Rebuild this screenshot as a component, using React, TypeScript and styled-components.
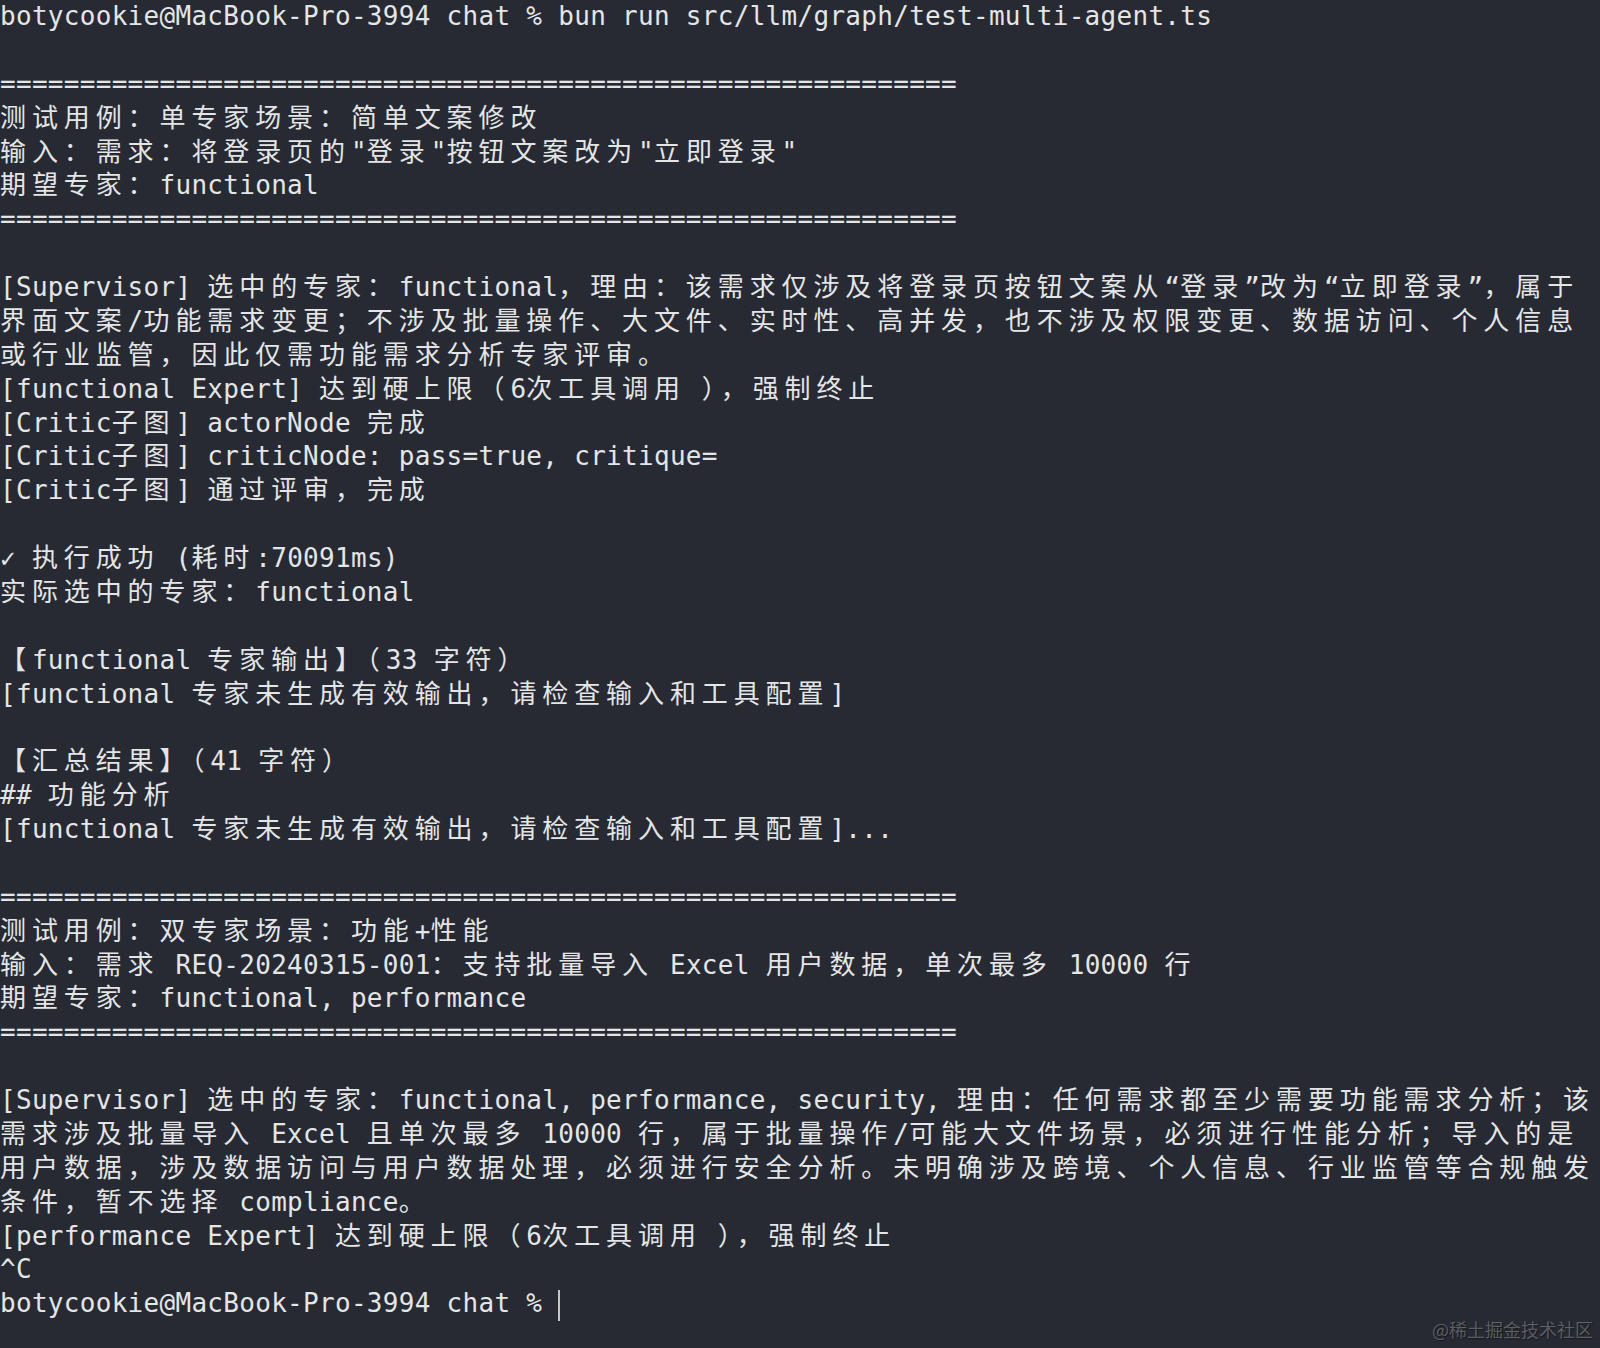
import React from "react";
import styled, { createGlobalStyle } from "styled-components";

const CELL = 15.95;
const ROW = 33.88;
const FONT = 26;

const GlobalStyle = createGlobalStyle`
  html, body {
    margin: 0;
    padding: 0;
    background: #272a32;
  }
  body {
    width: 1600px;
    height: 1348px;
    overflow: hidden;
  }
`;

const Terminal = styled.main`
  position: relative;
  width: 1600px;
  height: 1348px;
  background: #272a32;
  color: #e4e5e7;
  font-family: "DejaVu Sans Mono", "Liberation Mono", "Noto Sans CJK SC", monospace;
  font-size: ${FONT}px;
  letter-spacing: ${CELL - FONT * (1233 / 2048)}px;
  overflow: hidden;
  display: grid;
  grid-auto-rows: ${ROW}px;
  align-content: start;
`;

const Line = styled.div`
  white-space: pre;
  line-height: ${ROW}px;
  height: ${ROW}px;
`;

const Wide = styled.span`
  font-family: "Noto Sans CJK SC", "Noto Sans CJK JP", sans-serif;
  letter-spacing: ${2 * CELL - FONT}px;
  line-height: ${FONT}px;
`;

const Cursor = styled.span`
  display: inline-block;
  width: 1.5px;
  height: 31px;
  background: #c4c6ca;
  vertical-align: -9px;
`;

const Watermark = styled.div`
  position: absolute;
  right: 7px;
  bottom: 10px;
  font-family: "Noto Sans CJK SC", sans-serif;
  font-size: 18px;
  line-height: 18px;
  letter-spacing: 0;
  color: rgba(190, 193, 200, 0.38);
  text-shadow: 1px 1px 1px rgba(0, 0, 0, 0.45);
`;

const WIDE_RE =
  /[\u1100-\u115F\u2E80-\u303E\u3040-\uA4CF\uAC00-\uD7A3\uF900-\uFAFF\uFE30-\uFE4F\uFF00-\uFF60\uFFE0-\uFFE6]/;

type Seg = { wide: boolean; text: string };

function split(text: string): Seg[] {
  const segs: Seg[] = [];
  for (const ch of Array.from(text)) {
    const wide = WIDE_RE.test(ch);
    const last = segs[segs.length - 1];
    if (last && last.wide === wide) last.text += ch;
    else segs.push({ wide, text: ch });
  }
  return segs;
}

const TermLine: React.FC<{ text: string; children?: React.ReactNode }> = ({ text, children }) => (
  <Line>
    {split(text).map((s, i) =>
      s.wide ? <Wide key={i}>{s.text}</Wide> : <React.Fragment key={i}>{s.text}</React.Fragment>
    )}
    {children}
  </Line>
);

const SEP = "=".repeat(60);
const PROMPT = "botycookie@MacBook-Pro-3994 chat % ";

const LINES: string[] = [
  PROMPT + "bun run src/llm/graph/test-multi-agent.ts",
  "",
  SEP,
  "测试用例：单专家场景：简单文案修改",
  '输入：需求：将登录页的"登录"按钮文案改为"立即登录"',
  "期望专家：functional",
  SEP,
  "",
  "[Supervisor] 选中的专家：functional，理由：该需求仅涉及将登录页按钮文案从“登录”改为“立即登录”，属于",
  "界面文案/功能需求变更；不涉及批量操作、大文件、实时性、高并发，也不涉及权限变更、数据访问、个人信息",
  "或行业监管，因此仅需功能需求分析专家评审。",
  "[functional Expert] 达到硬上限（6次工具调用 ），强制终止",
  "[Critic子图] actorNode 完成",
  "[Critic子图] criticNode: pass=true, critique=",
  "[Critic子图] 通过评审，完成",
  "",
  "✓ 执行成功 (耗时:70091ms)",
  "实际选中的专家：functional",
  "",
  "【functional 专家输出】（33 字符）",
  "[functional 专家未生成有效输出，请检查输入和工具配置]",
  "",
  "【汇总结果】（41 字符）",
  "## 功能分析",
  "[functional 专家未生成有效输出，请检查输入和工具配置]...",
  "",
  SEP,
  "测试用例：双专家场景：功能+性能",
  "输入：需求 REQ-20240315-001：支持批量导入 Excel 用户数据，单次最多 10000 行",
  "期望专家：functional, performance",
  SEP,
  "",
  "[Supervisor] 选中的专家：functional, performance, security, 理由：任何需求都至少需要功能需求分析；该",
  "需求涉及批量导入 Excel 且单次最多 10000 行，属于批量操作/可能大文件场景，必须进行性能分析；导入的是",
  "用户数据，涉及数据访问与用户数据处理，必须进行安全分析。未明确涉及跨境、个人信息、行业监管等合规触发",
  "条件，暂不选择 compliance。",
  "[performance Expert] 达到硬上限（6次工具调用 ），强制终止",
  "^C",
];

export default function App() {
  return (
    <>
      <GlobalStyle />
      <Terminal>
        {LINES.map((l, i) => (
          <TermLine key={i} text={l} />
        ))}
        <TermLine text={PROMPT}>
          <Cursor />
        </TermLine>
        <Watermark>@稀土掘金技术社区</Watermark>
      </Terminal>
    </>
  );
}
